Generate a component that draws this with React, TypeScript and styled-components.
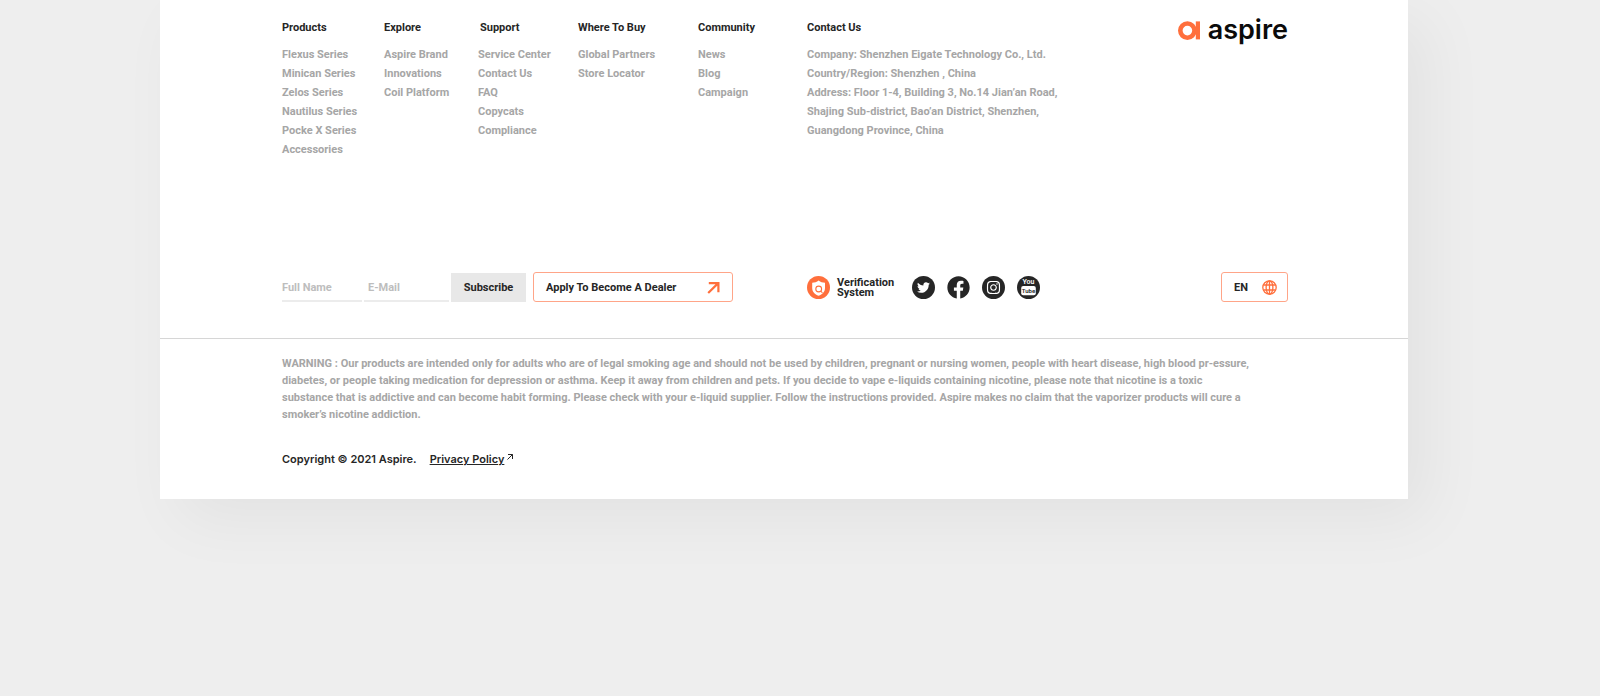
import React from "react";
import styled, { createGlobalStyle } from "styled-components";
import { FaFacebook, FaInstagram, FaTwitter } from "react-icons/fa";

const colors = {
  ink: "#262626",
  muted: "#a6a6a6",
  placeholder: "#bdbdbd",
  line: "#d6d6d6",
  accent: "#ff6f3c",
  accentSoft: "#ffa588",
};

const GlobalStyle = createGlobalStyle`
  *, *::before, *::after { box-sizing: border-box; }
  body {
    margin: 0;
    background: #eeeeee;
    color: ${colors.ink};
    font-family: Roboto, "Liberation Sans", sans-serif;
    font-size: 11px;
    font-weight: 700;
  }
  button, input { font: inherit; color: inherit; }
  a { color: inherit; text-decoration: none; }
`;

const Footer = styled.footer`
  margin: 0 12% 120px 10%;
  background: #fff;
  box-shadow: 20px 20px 60px rgba(0, 0, 0, 0.05);
`;

const Inner = styled.div`
  padding: 0 120px 0 122px;
`;

const Directory = styled.div`
  display: grid;
  grid-template-columns: 102px 94px 100px 120px 109px 1fr auto;
  padding-top: 20px;
`;

const Column = styled.section`
  white-space: nowrap;
`;

const Heading = styled.h2<{ $indent?: boolean }>`
  margin: 0 0 10px;
  padding-left: ${(p) => (p.$indent ? 2 : 0)}px;
  font-size: 11px;
  font-weight: 700;
  line-height: 15px;
`;

const List = styled.ul`
  margin: 0;
  padding: 0;
  list-style: none;
  color: ${colors.muted};
  line-height: 19px;
`;

const Address = styled.address`
  color: ${colors.muted};
  font-style: normal;
  line-height: 19px;
`;

const Brand = styled.a`
  display: flex;
  align-items: flex-start;
  gap: 8px;
  color: #0b0b0b;
  font-family: Inter, sans-serif;
  font-size: 27px;
  font-weight: 600;
  line-height: 20px;
`;

const Actions = styled.div`
  display: grid;
  grid-template-columns: 525px 1fr auto;
  align-items: center;
  padding-top: 113px;
  padding-bottom: 36px;
`;

const Group = styled.div<{ $gap: number }>`
  display: flex;
  align-items: center;
  gap: ${(p) => p.$gap}px;
`;

const SignUp = styled.form`
  display: flex;
  align-items: flex-end;
  gap: 2px;
`;

const Field = styled.input<{ $width: number; $inset?: number }>`
  width: ${(p) => p.$width}px;
  height: 30px;
  padding: 2px 0 0 ${(p) => p.$inset ?? 0}px;
  border: 0;
  border-bottom: 2px solid #ececec;
  border-radius: 0;
  background: none;
  outline: none;
  &::placeholder { color: ${colors.placeholder}; opacity: 1; }
`;

const Subscribe = styled.button`
  width: 75px;
  height: 29px;
  padding: 0;
  border: 0;
  background: #e8e8e8;
`;

const Outlined = styled.button<{ $width: number }>`
  display: flex;
  align-items: center;
  justify-content: space-between;
  width: ${(p) => p.$width}px;
  height: 30px;
  padding: 0 10px 0 12px;
  border: 1px solid ${colors.accentSoft};
  border-radius: 3px;
  background: #fff;
  svg { color: ${colors.accent}; }
`;

const Verification = styled.a`
  display: flex;
  align-items: center;
  gap: 7px;
  line-height: 10px;
`;

const Lines = styled.span`
  display: flex;
  flex-direction: column;
  padding-top: 2px;
`;

const Social = styled.a`
  display: flex;
  align-items: center;
  justify-content: center;
  width: 23px;
  height: 23px;
  border-radius: 50%;
  background: ${colors.ink};
  color: #fff;
  &[aria-label="Facebook"] { background: #fff; color: ${colors.ink}; }
`;

const Divider = styled.hr`
  height: 1px;
  margin: 0;
  border: 0;
  background: ${colors.line};
`;

const Warning = styled.p`
  margin: 0;
  padding-top: 16px;
  color: ${colors.muted};
  line-height: 17px;
`;

const Legal = styled.div`
  display: flex;
  gap: 13px;
  padding: 27px 0 31px;
  font-family: Inter, "Liberation Sans", sans-serif;
  font-weight: 600;
  line-height: 18px;
`;

const PolicyLink = styled.a`
  display: flex;
  gap: 3px;
  span { text-decoration: underline; }
  svg { margin-top: 4px; }
`;

const columns = [
  { title: "Products", items: ["Flexus Series", "Minican Series", "Zelos Series", "Nautilus Series", "Pocke X Series", "Accessories"] },
  { title: "Explore", items: ["Aspire Brand", "Innovations", "Coil Platform"] },
  { title: "Support", indent: true, items: ["Service Center", "Contact Us", "FAQ", "Copycats", "Compliance"] },
  { title: "Where To Buy", items: ["Global Partners", "Store Locator"] },
  { title: "Community", items: ["News", "Blog", "Campaign"] },
];

const BrandMark = () => (
  <svg width="22" height="20" viewBox="0 0 22 20" aria-hidden="true">
    <circle cx="9.4" cy="10.6" r="7.1" fill="none" stroke={colors.accent} strokeWidth="4.6" />
    <rect x="17.8" y="1.4" width="4.2" height="18" fill={colors.accent} />
    <rect x="16" y="8" width="3" height="5.4" fill={colors.accent} />
  </svg>
);

const ArrowIcon = () => (
  <svg width="15" height="13" viewBox="0 0 15 13" fill="none" stroke="currentColor" strokeWidth="2.2" aria-hidden="true">
    <path d="M1.2 12 11 2.4M1.8 2.2h9.6v9" />
  </svg>
);

const SmallArrow = () => (
  <svg width="6" height="6" viewBox="0 0 6 6" fill="none" stroke="currentColor" aria-hidden="true">
    <path d="M.5 5.5l5-5M1 .5h4.5V5" />
  </svg>
);

const ShieldIcon = () => (
  <svg width="23" height="23" viewBox="0 0 23 23" aria-hidden="true">
    <circle cx="11.5" cy="11.5" r="11.5" fill={colors.accent} />
    <path d="M11.6 4.4c1.8 1.4 4 2.2 6.4 2.3v5.2c0 3.8-2.6 6.4-6.4 7.8-3.8-1.4-6.4-4-6.4-7.8V6.7c2.4-.1 4.6-.9 6.4-2.3z" fill="#fff" />
    <circle cx="11.7" cy="13" r="2.9" fill="none" stroke={colors.accent} strokeWidth="1.1" />
    <path d="m13.8 15 1.6 2" stroke={colors.accent} strokeWidth="1.1" />
  </svg>
);

const GlobeIcon = () => (
  <svg width="15" height="15" viewBox="0 0 15 15" fill="none" stroke="currentColor" strokeWidth="1.3" aria-hidden="true">
    <circle cx="7.5" cy="7.5" r="6.7" />
    <ellipse cx="7.5" cy="7.5" rx="3.4" ry="6.7" />
    <path d="M7.5.8v13.4M1.6 5h11.8M1.6 10h11.8" />
  </svg>
);

const YouTubeIcon = () => (
  <svg width="23" height="23" viewBox="0 0 23 23" fontFamily="Roboto, sans-serif" fontWeight="600" textAnchor="middle" aria-hidden="true">
    <text x="11.5" y="8.4" fontSize="7" fill="#fff">You</text>
    <rect x="4.2" y="10" width="14.6" height="9.2" rx="2" fill="#fff" />
    <text x="11.5" y="17" fontSize="6" fill={colors.ink}>Tube</text>
  </svg>
);

export default function App() {
  return (
    <>
      <GlobalStyle />
      <Footer>
        <Inner>
          <Directory>
            {columns.map((c) => (
              <Column key={c.title}>
                <Heading $indent={c.indent}>{c.title}</Heading>
                <List>
                  {c.items.map((item) => (
                    <li key={item}><a href="#">{item}</a></li>
                  ))}
                </List>
              </Column>
            ))}
            <Column>
              <Heading>Contact Us</Heading>
              <Address>
                Company: Shenzhen Eigate Technology Co., Ltd.<br />
                Country/Region: Shenzhen , China<br />
                Address: Floor 1-4, Building 3, No.14 Jian’an Road,<br />
                Shajing Sub-district, Bao’an District, Shenzhen,<br />
                Guangdong Province, China
              </Address>
            </Column>
            <Brand href="#">
              <BrandMark />
              aspire
            </Brand>
          </Directory>
          <Actions>
            <Group $gap={7}>
              <SignUp onSubmit={(e) => e.preventDefault()}>
                <Field $width={80} type="text" placeholder="Full Name" aria-label="Full Name" />
                <Field $width={85} $inset={4} type="email" placeholder="E-Mail" aria-label="E-Mail" />
                <Subscribe type="submit">Subscribe</Subscribe>
              </SignUp>
              <Outlined $width={200} type="button">
                Apply To Become A Dealer
                <ArrowIcon />
              </Outlined>
            </Group>
            <Group $gap={18}>
              <Verification href="#">
                <ShieldIcon />
                <Lines><span>Verification</span><span>System</span></Lines>
              </Verification>
              <Group $gap={12}>
                <Social href="#" aria-label="Twitter"><FaTwitter size={13} /></Social>
                <Social href="#" aria-label="Facebook"><FaFacebook size={23} /></Social>
                <Social href="#" aria-label="Instagram"><FaInstagram size={15} /></Social>
                <Social href="#" aria-label="YouTube"><YouTubeIcon /></Social>
              </Group>
            </Group>
            <Outlined $width={67} type="button">
              EN
              <GlobeIcon />
            </Outlined>
          </Actions>
        </Inner>
        <Divider />
        <Inner>
          <Warning>
            WARNING : Our products are intended only for adults who are of legal smoking age and should not be used by children, pregnant or nursing women, people with heart disease, high blood pr-essure,<br />
            diabetes, or people taking medication for depression or asthma. Keep it away from children and pets. If you decide to vape e-liquids containing nicotine, please note that nicotine is a toxic<br />
            substance that is addictive and can become habit forming. Please check with your e-liquid supplier. Follow the instructions provided. Aspire makes no claim that the vaporizer products will cure a<br />
            smoker’s nicotine addiction.
          </Warning>
          <Legal>
            <span>Copyright © 2021 Aspire.</span>
            <PolicyLink href="#"><span>Privacy Policy</span><SmallArrow /></PolicyLink>
          </Legal>
        </Inner>
      </Footer>
    </>
  );
}
